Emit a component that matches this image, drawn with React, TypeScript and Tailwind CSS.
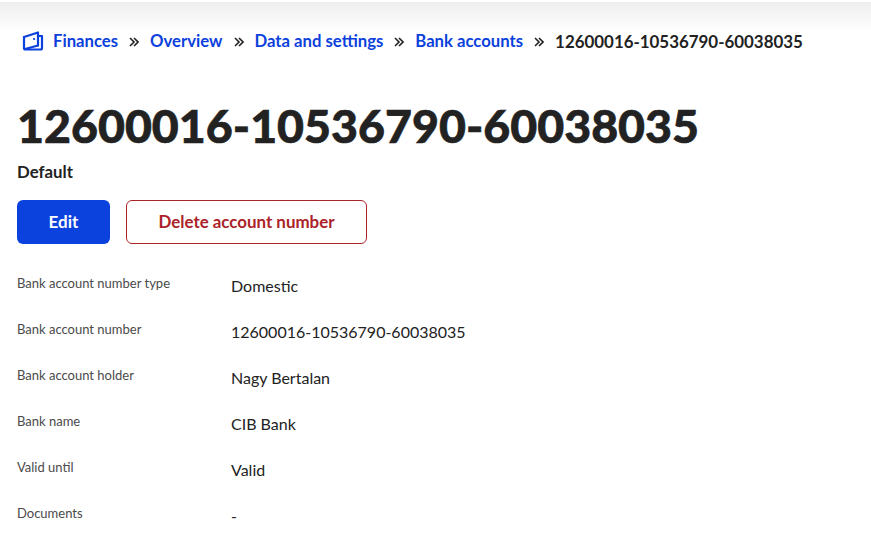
import React from 'react';

const crumbs = ['Finances', 'Overview', 'Data and settings', 'Bank accounts'];

const rows = [
  ['Bank account number type', 'Domestic'],
  ['Bank account number', '12600016-10536790-60038035'],
  ['Bank account holder', 'Nagy Bertalan'],
  ['Bank name', 'CIB Bank'],
  ['Valid until', 'Valid'],
  ['Documents', '-'],
];

const WalletIcon = () => (
  <svg width="22" height="20" viewBox="0 0 22 20" fill="none" stroke="#0b41dc" strokeWidth="2.2" strokeLinejoin="round" strokeLinecap="round">
    <path d="M2 6 L16 1.5 V14.5" />
    <path d="M16 5 H20 V17 Q20 18.5 18.5 18.5 H3.5 Q2 18.5 2 17 V6" />
    <path d="M3 18 L16 14.5" />
    <circle cx="12" cy="8" r="0.6" fill="#0b41dc" strokeWidth="1" />
  </svg>
);

const Chevrons = () => (
  <svg width="10" height="10" viewBox="0 0 10 10" fill="none" stroke="#222" strokeWidth="1.6" className="mx-[11px]">
    <path d="M1 1 L5 5 L1 9" />
    <path d="M5 1 L9 5 L5 9" />
  </svg>
);

export default function App() {
  return (
    <div className="h-[535px] w-[871px] overflow-hidden bg-white text-[#222] font-['Lato',sans-serif]">
      <div className="mt-[2px] h-[30px] bg-gradient-to-b from-[#eeeeee] to-white" />
      <nav className="-mt-[1px] ml-[22px] flex h-[21px] items-center text-[16.9px] font-bold">
        <div className="-mt-[1px]">
          <WalletIcon />
        </div>
        <span className="ml-[9px] flex items-center">
          {crumbs.map((c) => (
            <React.Fragment key={c}>
              <a className="text-[16.7px] text-[#0b41dc]">{c}</a>
              <Chevrons />
            </React.Fragment>
          ))}
          <span>12600016-10536790-60038035</span>
        </span>
      </nav>

      <div className="px-[17px]">
        <h1 className="mt-[44px] text-[46.5px] leading-[58px] font-black [-webkit-text-stroke:0.6px_#222]">12600016-10536790-60038035</h1>
        <p className="mt-[6px] text-[16.8px] leading-[24px] font-bold">Default</p>

        <div className="mt-[16px] flex gap-[16px]">
          <button className="h-[44px] w-[93px] rounded-[6px] bg-[#0b41dc] text-[17px] font-bold text-white">Edit</button>
          <button className="h-[44px] w-[241px] rounded-[6px] border border-[#ab2328] bg-white text-[16.9px] font-bold text-[#ab2328]">Delete account number</button>
        </div>

        <dl className="mt-[29px]">
          {rows.map(([label, value]) => (
            <div key={label} className="flex h-[46px]">
              <dt className="w-[214px] text-[13px] leading-[20px] text-[#4a4a4a]">{label}</dt>
              <dd className="mt-[1px] text-[16px] leading-[24px]">{value}</dd>
            </div>
          ))}
        </dl>
      </div>
    </div>
  );
}
